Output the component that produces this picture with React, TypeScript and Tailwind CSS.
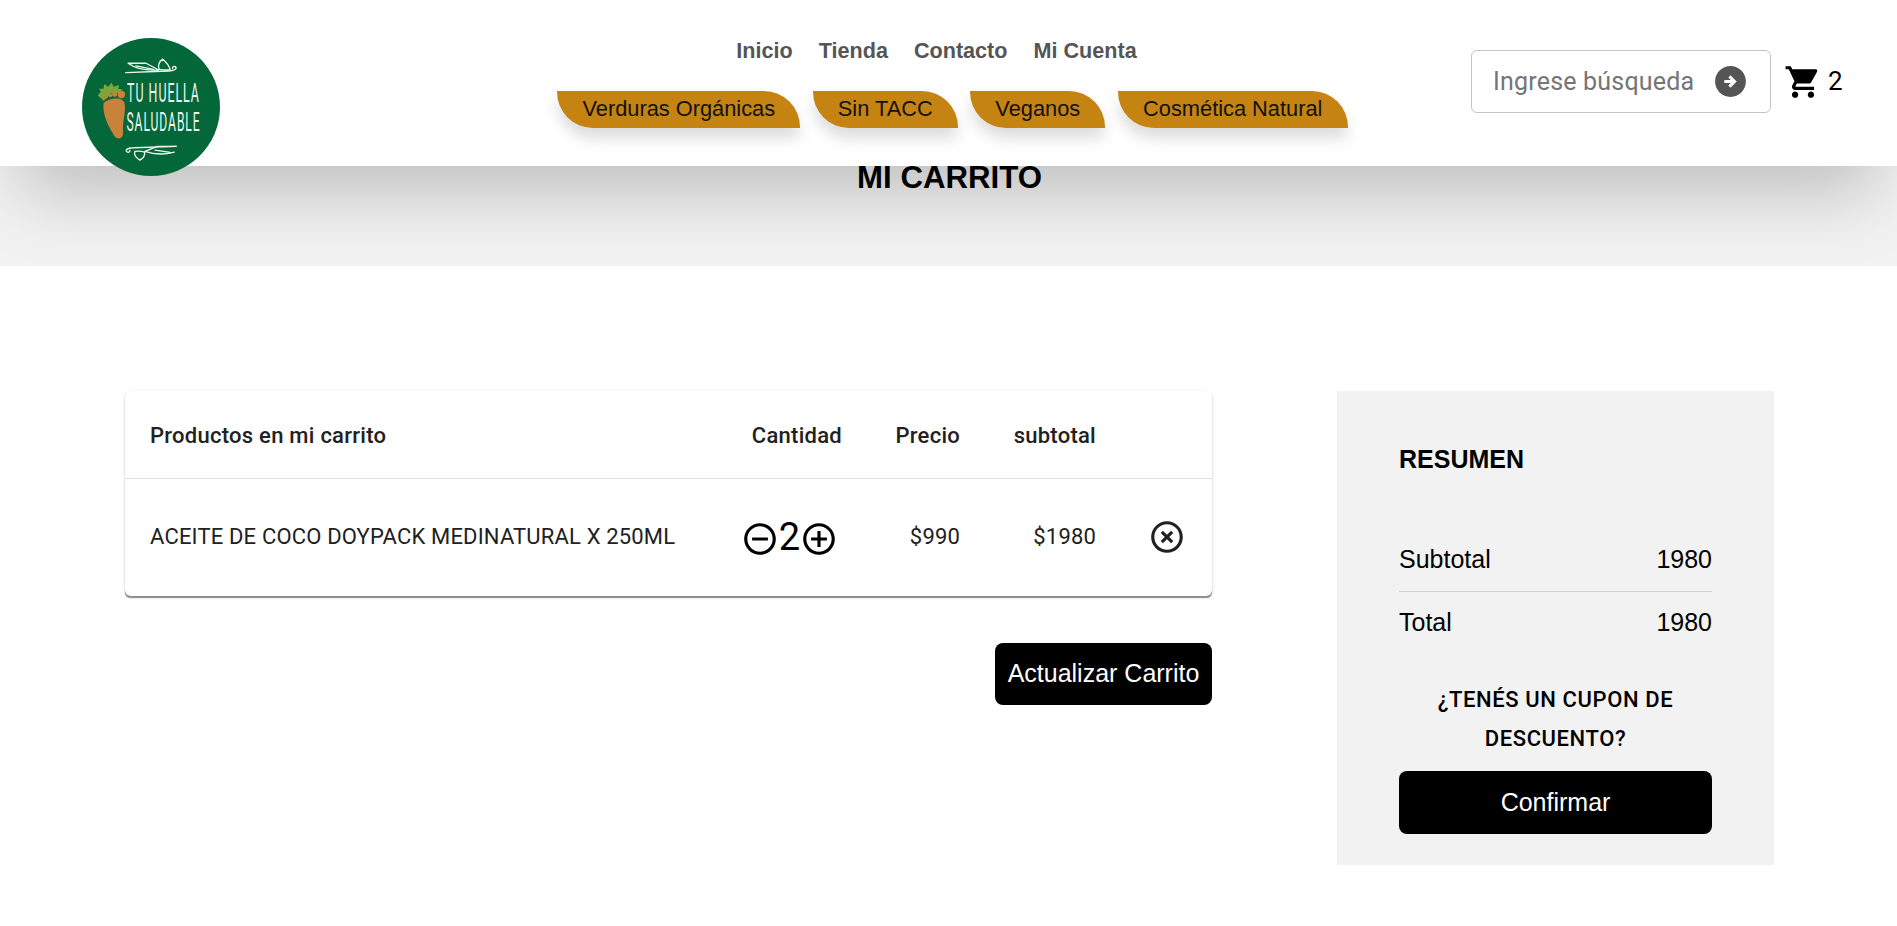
const roboto = "font-['Roboto',sans-serif]";
const arial = "font-['Liberation_Sans',Arial,sans-serif]";

function Icon({ d, size, className }: { d: string; size: number; className?: string }) {
  return (
    <svg width={size} height={size} viewBox="0 0 24 24" fill="currentColor" className={className}>
      <path d={d} />
    </svg>
  );
}

const CART = "M7 18c-1.1 0-1.99.9-1.99 2S5.9 22 7 22s2-.9 2-2-.9-2-2-2zM1 2v2h2l3.6 7.59-1.35 2.45c-.16.28-.25.61-.25.96 0 1.1.9 2 2 2h12v-2H7.42c-.14 0-.25-.11-.25-.25l.03-.12.9-1.63h7.45c.75 0 1.41-.41 1.75-1.03l3.58-6.49c.08-.14.12-.31.12-.48 0-.55-.45-1-1-1H5.21l-.94-2H1zm16 16c-1.1 0-1.99.9-1.99 2s.89 2 1.99 2 2-.9 2-2-.9-2-2-2z";
const MINUS = "M7 11v2h10v-2H7zm5-9C6.48 2 2 6.48 2 12s4.48 10 10 10 10-4.48 10-10S17.52 2 12 2zm0 18c-4.41 0-8-3.59-8-8s3.59-8 8-8 8 3.59 8 8-3.59 8-8 8z";
const PLUS = "M13 7h-2v4H7v2h4v4h2v-4h4v-2h-4V7zm-1-5C6.48 2 2 6.48 2 12s4.48 10 10 10 10-4.48 10-10S17.52 2 12 2zm0 18c-4.41 0-8-3.59-8-8s3.59-8 8-8 8 3.59 8 8-3.59 8-8 8z";
const CLOSE = "M14.59 8L12 10.59 9.41 8 8 9.41 10.59 12 8 14.59 9.41 16 12 13.41 14.59 16 16 14.59 13.41 12 16 9.41 14.59 8zM12 2C6.47 2 2 6.47 2 12s4.47 10 10 10 10-4.47 10-10S17.53 2 12 2zm0 18c-4.41 0-8-3.59-8-8s3.59-8 8-8 8 3.59 8 8-3.59 8-8 8z";
const ARROW = "M22 12c0-5.52-4.48-10-10-10S2 6.48 2 12s4.48 10 10 10 10-4.48 10-10zm-10 4l-1.41-1.41L12.17 13H8v-2h4.17l-1.58-1.59L12 8l4 4-4 4z";

function Logo() {
  return (
    <svg width="138" height="138" viewBox="68 55 410 410" className="relative z-20 shrink-0">
      <circle cx="273" cy="260" r="205" fill="#04673a" />
      <g fill="none" stroke="#f0f7f0" strokeWidth="4" strokeLinecap="round" strokeLinejoin="round">
        <path d="M198 158 L325 153 C342 153 350 147 347 142 C343 137 335 140 337 146" />
        <path d="M205 130 H258 L296 150 C265 152 232 150 205 130 Z" />
        <path d="M228 138 L280 148" />
        <path d="M308 118 C296 125 292 140 298 148 M308 118 C320 128 328 140 330 150 C318 150 305 150 298 148" />
        <path d="M348 377 L222 381 C205 381 197 387 200 392 C204 397 212 394 210 388" />
        <path d="M348 377 H292 L255 392 C285 402 320 400 342 394" />
        <path d="M285 388 L330 395" />
        <path d="M240 418 C228 410 222 400 225 392 C235 390 248 392 254 394 C256 404 250 412 240 418 Z" />
      </g>
      <path d="M115 226 L124 214 L118 206 L132 206 L134 192 L146 200 L156 188 L162 200 L178 195 L176 206 L188 208 L180 218 L152 220 L136 238 L124 234 Z" fill="#7da63a" />
      <g fill="#c8823c">
        <path d="M132 248 C150 232 192 228 195 252 C198 282 188 300 190 335 C192 356 172 358 164 346 C148 320 128 284 132 248 Z" />
        <circle cx="185" cy="223" r="11" />
        <circle cx="165" cy="222" r="7.5" />
        <circle cx="152" cy="225" r="6" />
        <circle cx="140" cy="230" r="5" />
        <circle cx="132" cy="237" r="4" />
      </g>
      <g fill="#f0f7f0" fontFamily="Roboto, sans-serif" fontSize="76" letterSpacing="6">
        <text transform="translate(202 245) scale(0.485 1)">TU HUELLA</text>
        <text transform="translate(200 330) scale(0.472 1)">SALUDABLE</text>
      </g>
    </svg>
  );
}

function Pill({ children, className }: { children: string; className: string }) {
  return (
    <a className={`flex h-[37px] items-center justify-center rounded-tr-[36px] rounded-bl-[36px] bg-[#c58311] text-[21.8px] text-[#111] shadow-[0_10px_15px_rgba(0,0,0,0.14)] ${className}`}>
      {children}
    </a>
  );
}

export default function App() {
  return (
    <div className="min-h-[926px] bg-white">
      <header className={`relative z-10 flex h-[166px] items-start bg-white pl-[82px] shadow-[0_45px_72px_-20px_rgba(0,0,0,0.22)] ${arial}`}>
        <div className="mt-[38px]"><Logo /></div>
        <div className="ml-[337px] flex w-[791px] flex-col items-center pt-[39px]">
          <nav className="ml-[-32px] flex gap-[26px] text-[21.6px] leading-[24px] font-bold text-[#555]">
            <a>Inicio</a>
            <a>Tienda</a>
            <a>Contacto</a>
            <a>Mi Cuenta</a>
          </nav>
          <div className="mt-[28px] flex gap-[12.5px]">
            <Pill className="w-[243px]">Verduras Orgánicas</Pill>
            <Pill className="w-[145px]">Sin TACC</Pill>
            <Pill className="w-[135px]">Veganos</Pill>
            <Pill className="w-[230px]">Cosmética Natural</Pill>
          </div>
        </div>
        <div className={`ml-[123px] mt-[50px] flex items-center ${roboto}`}>
          <div className="flex h-[63px] w-[300px] items-center rounded-[6px] border border-[#c4c4c4] bg-white pl-[21px]">
            <span className="w-[200px] text-[25px] tracking-[0.2px] whitespace-nowrap text-[#757575]">Ingrese búsqueda</span>
            <Icon d={ARROW} size={37} className="ml-[19px] text-[#555]" />
          </div>
          <Icon d={CART} size={38} className="ml-[13px] text-black" />
          <span className="ml-[6px] text-[26px] text-black">2</span>
        </div>
      </header>

      <section className="flex h-[100px] justify-center bg-[#f2f2f2]">
        <h1 className={`mt-[-6px] ml-[2px] text-[31.2px] leading-[36px] font-bold text-black ${arial}`}>MI CARRITO</h1>
      </section>

      <main className="relative z-20 flex items-start bg-white pt-[125px] pl-[125px]">
        <div className="w-[1087px]">
          <div className={`rounded-[6px] bg-white text-[#212121] shadow-[0_1px_4px_rgba(0,0,0,0.12),0_2px_1px_-0.5px_rgba(0,0,0,0.42)] ${roboto}`}>
            <div className="flex h-[88px] items-center border-b border-[#e0e0e0] pt-[1px] pl-[25px] text-[22px] font-medium tracking-[0.26px]">
              <div className="w-[561px]">Productos en mi carrito</div>
              <div className="w-[131px] text-right">Cantidad</div>
              <div className="w-[118px] text-right">Precio</div>
              <div className="w-[136px] text-right">subtotal</div>
            </div>
            <div className="flex h-[117px] items-center pb-[2px] pl-[25px] text-[22px] font-normal tracking-[0.17px]">
              <div className="w-[561px] whitespace-nowrap">ACEITE DE COCO DOYPACK MEDINATURAL X 250ML</div>
              <div className="flex w-[131px] items-center justify-end pr-[4px] text-black">
                <Icon d={MINUS} size={38} className="mt-[5px]" />
                <span className="text-[38px] leading-[40px] tracking-normal">2</span>
                <Icon d={PLUS} size={38} className="mt-[5px]" />
              </div>
              <div className="w-[118px] text-right">$990</div>
              <div className="w-[136px] text-right">$1980</div>
              <div className="flex w-[116px] justify-center pl-[26px]">
                <Icon d={CLOSE} size={38} />
              </div>
            </div>
          </div>
          <div className="mt-[47px] flex justify-end">
            <button className={`h-[62px] w-[217px] rounded-[8px] bg-black text-[25px] text-white ${arial}`}>Actualizar Carrito</button>
          </div>
        </div>

        <aside className={`ml-[125px] h-[474px] w-[437px] bg-[#f2f2f2] px-[62px] pt-[54px] text-black ${arial}`}>
          <h2 className="text-[25px] leading-[28px] font-bold">RESUMEN</h2>
          <div className="mt-[55px] flex h-[64px] items-center justify-between border-b border-[#d0d0d0] text-[25px]">
            <span>Subtotal</span>
            <span>1980</span>
          </div>
          <div className="flex h-[62px] items-center justify-between text-[25px]">
            <span>Total</span>
            <span>1980</span>
          </div>
          <p className={`mt-[26px] text-center text-[22px] leading-[39px] font-medium tracking-[0.6px] ${roboto}`}>¿TENÉS UN CUPON DE DESCUENTO?</p>
          <button className="mt-[13px] h-[63px] w-full rounded-[8px] bg-black text-[25px] text-white">Confirmar</button>
        </aside>
      </main>
    </div>
  );
}
